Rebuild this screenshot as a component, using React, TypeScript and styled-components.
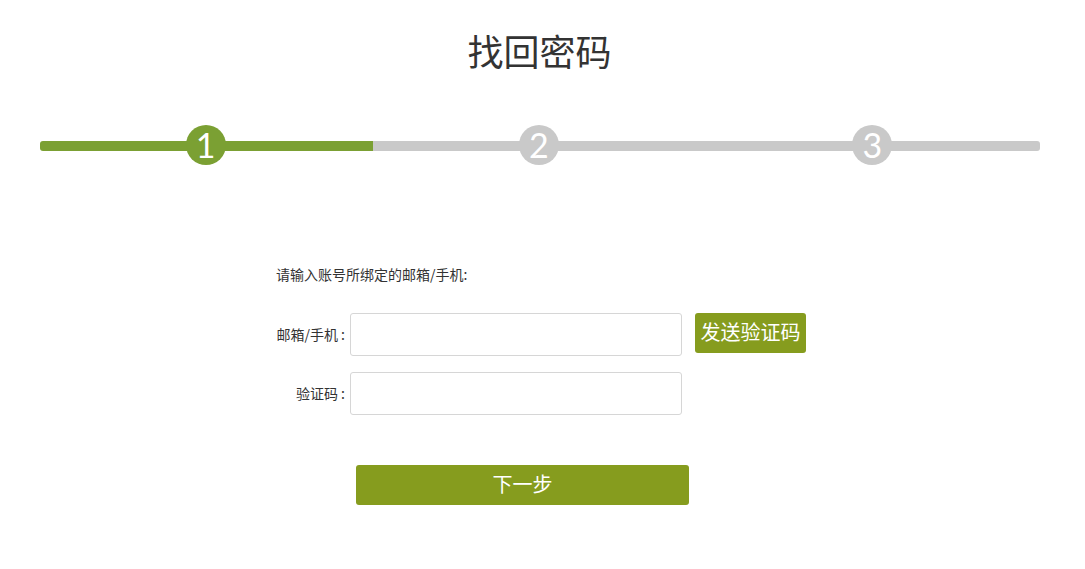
import { createGlobalStyle, styled } from "styled-components";

const GlobalStyle = createGlobalStyle`
  html, body {
    margin: 0;
    padding: 0;
    background: #fff;
  }
  body {
    font-family: "Noto Sans CJK SC", "Liberation Sans", sans-serif;
    color: #333;
  }
  * {
    box-sizing: border-box;
  }
`;

const GREEN = "#7ba033";
const OLIVE = "#869c1e";
const GREY = "#c9c9c9";

const Page = styled.div`
  width: 1085px;
  padding-top: 30px;
`;

const Title = styled.h1`
  margin: 0;
  padding-right: 6px;
  font-size: 36px;
  line-height: 40px;
  font-weight: 400;
  text-align: center;
  color: #333;
`;

const Steps = styled.div`
  display: flex;
  width: 1000px;
  margin: 55px 0 0 40px;
`;

const Step = styled.div`
  flex: 1;
  display: grid;
  grid-template-areas: "cell";
  align-items: center;
  height: 40px;
`;

const Track = styled.div<{ $done: boolean; $pos: "first" | "mid" | "last" }>`
  grid-area: cell;
  height: 10px;
  margin-top: 1px;
  background: ${(p) => (p.$done ? GREEN : GREY)};
  border-radius: ${(p) =>
    p.$pos === "first" ? "3px 0 0 3px" : p.$pos === "last" ? "0 3px 3px 0" : "0"};
`;

const Dot = styled.div<{ $done: boolean }>`
  grid-area: cell;
  justify-self: center;
  width: 40px;
  height: 40px;
  border-radius: 50%;
  background: ${(p) => (p.$done ? GREEN : GREY)};
  color: #fff;
  font-family: "Lato", "Open Sans", sans-serif;
  font-weight: 400;
  font-size: 34px;
  line-height: 40px;
  text-align: center;
  transform: translateX(-1px);
`;

const Form = styled.div`
  width: 533px;
  margin: 99px auto 0;
  font-size: 14px;
`;

const Hint = styled.div`
  line-height: 20px;
  color: #333;
`;

const Row = styled.div<{ $gap: number }>`
  display: flex;
  align-items: flex-start;
  margin-top: ${(p) => p.$gap}px;
`;

const Label = styled.label`
  width: 74px;
  height: 43px;
  padding-right: 5px;
  line-height: 43px;
  text-align: right;
  color: #333;
  white-space: nowrap;
`;

const Input = styled.input`
  width: 332px;
  height: 43px;
  border: 1px solid #d6d6d6;
  border-radius: 3px;
  outline: none;
  padding: 0 10px;
  font-size: 14px;
`;

const SendButton = styled.button`
  margin-left: 13px;
  width: 111px;
  height: 40px;
  border: none;
  border-radius: 3px;
  background: ${OLIVE};
  color: #fff;
  font-family: inherit;
  font-size: 20px;
  padding: 0 0 3px;
  cursor: pointer;
`;

const NextButton = styled.button`
  display: block;
  margin: 50px 0 0 80px;
  width: 333px;
  height: 40px;
  border: none;
  border-radius: 3px;
  background: ${OLIVE};
  color: #fff;
  font-family: inherit;
  font-size: 20px;
  padding: 0 0 3px;
  cursor: pointer;
`;

const steps = [1, 2, 3];
const current = 1;

export default function App() {
  return (
    <>
      <GlobalStyle />
      <Page>
        <Title>找回密码</Title>
        <Steps>
          {steps.map((n, i) => (
            <Step key={n}>
              <Track
                $done={n <= current}
                $pos={i === 0 ? "first" : i === steps.length - 1 ? "last" : "mid"}
              />
              <Dot $done={n <= current}>{n}</Dot>
            </Step>
          ))}
        </Steps>
        <Form>
          <Hint>请输入账号所绑定的邮箱/手机:</Hint>
          <Row $gap={29}>
            <Label>邮箱/手机 :</Label>
            <Input />
            <SendButton>发送验证码</SendButton>
          </Row>
          <Row $gap={16}>
            <Label>验证码 :</Label>
            <Input />
          </Row>
          <NextButton>下一步</NextButton>
        </Form>
      </Page>
    </>
  );
}
